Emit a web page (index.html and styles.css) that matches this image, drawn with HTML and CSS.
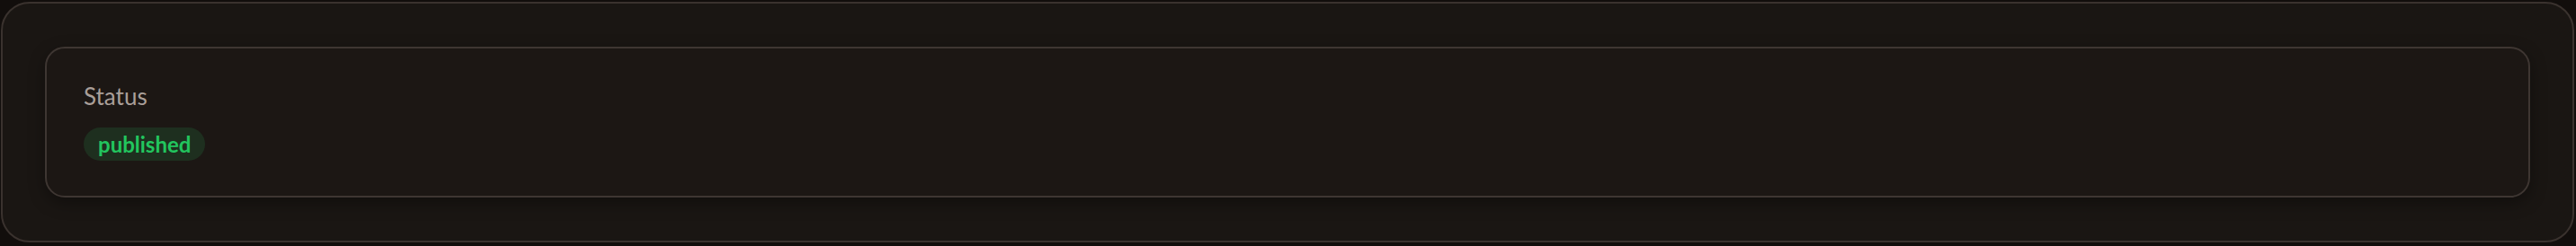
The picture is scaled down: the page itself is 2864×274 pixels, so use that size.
FILE: index.html
```html
<!DOCTYPE html>
<html lang="en">

<head>
  <meta charset="UTF-8">
  <meta name="viewport" content="width=device-width, initial-scale=1.0">
  <title>Status</title>

  <link rel="stylesheet" href="styles.css">
</head>

<body>
  <div class="panel">
    <div class="field-card">
      <div class="field-label">Status</div>
      <span class="badge badge-published">published</span>
    </div>
  </div>
</body>

</html>
```

FILE: styles.css
```css
body {
  margin: 0;
  padding: 2px 2px 3px 1px;
  background: #120e0c;
  font-family: Lato, "Noto Sans", sans-serif;
}

.panel {
  height: 268px;
  box-sizing: border-box;
  padding: 48px 47px;

  background: #1a1613;
  border: 2px solid #3a322e;
  border-radius: 32px;
}

.field-card {
  height: 168px;
  box-sizing: border-box;
  padding: 35px 41px 0;

  background: #1c1714;
  border: 2px solid #3e3632;
  border-radius: 22px;
  box-shadow: 0 6px 18px rgba(0, 0, 0, 0.35);
}

.field-label {
  font-size: 26px;
  line-height: 37px;
  color: #a99f99;
  margin-bottom: 16px;
}

.badge {
  display: inline-block;
  padding: 4px 16px;
  border-radius: 999px;

  font-size: 24px;
  font-weight: 700;
  line-height: 29px;
}

.badge-published {
  background: #1e2f1f;
  color: #22c55e;
}
```
